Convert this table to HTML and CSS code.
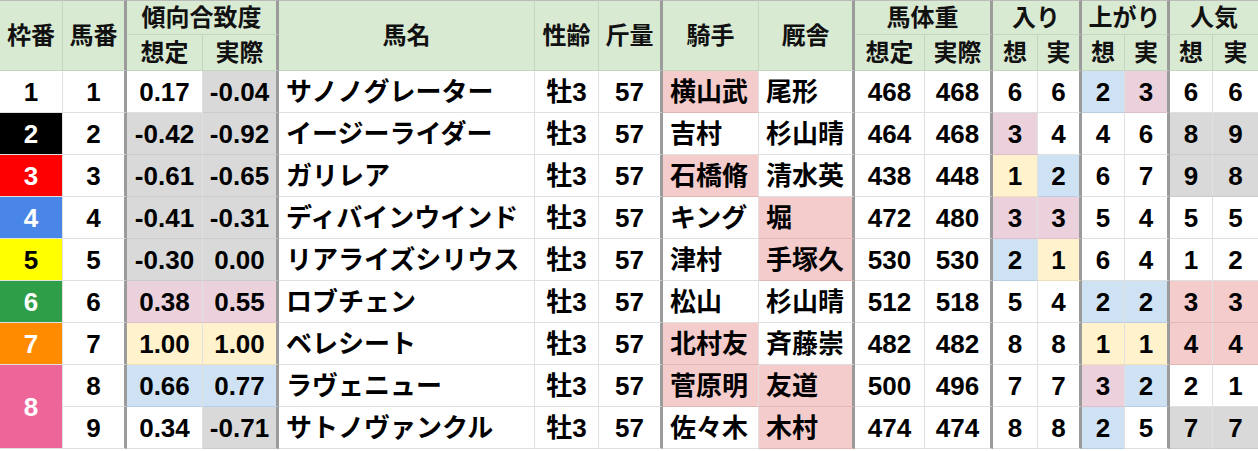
FILE: index.html
```html
<!DOCTYPE html>
<html lang="ja">
<head>
<meta charset="utf-8">
<title>傾向合致度</title>
<link rel="stylesheet" href="styles.css">
</head>
<body>
<table class="sheet">
  <colgroup>
    <col class="w63"><col class="w64"><col class="w76"><col class="w76"><col class="w256">
    <col class="w64"><col class="w64"><col class="w96"><col class="w96"><col class="w70">
    <col class="w68"><col class="w45"><col class="w44"><col class="w43"><col class="w45">
    <col class="w43"><col class="w45">
  </colgroup>
  <thead>
    <tr class="h1">
      <th rowspan="2">枠番</th>
      <th rowspan="2" class="tk">馬番</th>
      <th colspan="2" class="tk">傾向合致度</th>
      <th rowspan="2">馬名</th>
      <th rowspan="2">性齢</th>
      <th rowspan="2" class="tk">斤量</th>
      <th rowspan="2">騎手</th>
      <th rowspan="2" class="tk">厩舎</th>
      <th colspan="2" class="tk">馬体重</th>
      <th colspan="2" class="tk">入り</th>
      <th colspan="2" class="tk">上がり</th>
      <th colspan="2">人気</th>
    </tr>
    <tr class="h2">
      <th>想定</th><th class="tk">実際</th>
      <th>想定</th><th class="tk">実際</th>
      <th>想</th><th class="tk">実</th>
      <th>想</th><th class="tk">実</th>
      <th>想</th><th>実</th>
    </tr>
  </thead>
  <tbody>
    <tr>
      <td class="waku w1">1</td><td class="tk">1</td>
      <td>0.17</td><td class="gy tk">-0.04</td>
      <td class="nm">サノノグレーター</td><td>牡3</td><td class="tk">57</td>
      <td class="nm rd">横山武</td><td class="nm tk">尾形</td>
      <td>468</td><td class="tk">468</td>
      <td>6</td><td class="tk">6</td>
      <td class="bl">2</td><td class="mg tk">3</td>
      <td>6</td><td>6</td>
    </tr>
    <tr>
      <td class="waku w2">2</td><td class="tk">2</td>
      <td class="gy">-0.42</td><td class="gy tk">-0.92</td>
      <td class="nm">イージーライダー</td><td>牡3</td><td class="tk">57</td>
      <td class="nm">吉村</td><td class="nm tk">杉山晴</td>
      <td>464</td><td class="tk">468</td>
      <td class="mg">3</td><td class="tk">4</td>
      <td>4</td><td class="tk">6</td>
      <td class="gy">8</td><td class="gy">9</td>
    </tr>
    <tr>
      <td class="waku w3">3</td><td class="tk">3</td>
      <td class="gy">-0.61</td><td class="gy tk">-0.65</td>
      <td class="nm">ガリレア</td><td>牡3</td><td class="tk">57</td>
      <td class="nm rd">石橋脩</td><td class="nm tk">清水英</td>
      <td>438</td><td class="tk">448</td>
      <td class="yl">1</td><td class="bl tk">2</td>
      <td>6</td><td class="tk">7</td>
      <td class="gy">9</td><td class="gy">8</td>
    </tr>
    <tr>
      <td class="waku w4">4</td><td class="tk">4</td>
      <td class="gy">-0.41</td><td class="gy tk">-0.31</td>
      <td class="nm">ディバインウインド</td><td>牡3</td><td class="tk">57</td>
      <td class="nm">キング</td><td class="nm rd tk">堀</td>
      <td>472</td><td class="tk">480</td>
      <td class="mg">3</td><td class="mg tk">3</td>
      <td>5</td><td class="tk">4</td>
      <td>5</td><td>5</td>
    </tr>
    <tr>
      <td class="waku w5">5</td><td class="tk">5</td>
      <td class="gy">-0.30</td><td class="gy tk">0.00</td>
      <td class="nm">リアライズシリウス</td><td>牡3</td><td class="tk">57</td>
      <td class="nm">津村</td><td class="nm rd tk">手塚久</td>
      <td>530</td><td class="tk">530</td>
      <td class="bl">2</td><td class="yl tk">1</td>
      <td>6</td><td class="tk">4</td>
      <td>1</td><td>2</td>
    </tr>
    <tr>
      <td class="waku w6">6</td><td class="tk">6</td>
      <td class="mg">0.38</td><td class="mg tk">0.55</td>
      <td class="nm">ロブチェン</td><td>牡3</td><td class="tk">57</td>
      <td class="nm">松山</td><td class="nm tk">杉山晴</td>
      <td>512</td><td class="tk">518</td>
      <td>5</td><td class="tk">4</td>
      <td class="bl">2</td><td class="bl tk">2</td>
      <td class="rd">3</td><td class="rd">3</td>
    </tr>
    <tr>
      <td class="waku w7">7</td><td class="tk">7</td>
      <td class="yl">1.00</td><td class="yl tk">1.00</td>
      <td class="nm">ベレシート</td><td>牡3</td><td class="tk">57</td>
      <td class="nm rd">北村友</td><td class="nm tk">斉藤崇</td>
      <td>482</td><td class="tk">482</td>
      <td>8</td><td class="tk">8</td>
      <td class="yl">1</td><td class="yl tk">1</td>
      <td class="rd">4</td><td class="rd">4</td>
    </tr>
    <tr>
      <td class="waku w8" rowspan="2">8</td><td class="tk">8</td>
      <td class="bl">0.66</td><td class="bl tk">0.77</td>
      <td class="nm">ラヴェニュー</td><td>牡3</td><td class="tk">57</td>
      <td class="nm rd">菅原明</td><td class="nm rd tk">友道</td>
      <td>500</td><td class="tk">496</td>
      <td>7</td><td class="tk">7</td>
      <td class="mg">3</td><td class="bl tk">2</td>
      <td>2</td><td>1</td>
    </tr>
    <tr>
      <td class="tk">9</td>
      <td>0.34</td><td class="gy tk">-0.71</td>
      <td class="nm">サトノヴァンクル</td><td>牡3</td><td class="tk">57</td>
      <td class="nm">佐々木</td><td class="nm rd tk">木村</td>
      <td>474</td><td class="tk">474</td>
      <td>8</td><td class="tk">8</td>
      <td class="bl">2</td><td class="tk">5</td>
      <td class="gy">7</td><td class="gy">7</td>
    </tr>
  </tbody>
</table>
</body>
</html>
```

FILE: styles.css
```css
html, body {
  margin: 0;
  padding: 0;
  background: #ffffff;
}

.sheet {
  table-layout: fixed;
  width: 1258px;
  border-collapse: separate;
  border-spacing: 0;
  font-family: "Liberation Sans", "Noto Sans CJK JP", sans-serif;
  font-weight: bold;
  color: #000;
}

.w63 { width: 63px; }
.w64 { width: 64px; }
.w76 { width: 76px; }
.w256 { width: 256px; }
.w96 { width: 96px; }
.w70 { width: 70px; }
.w68 { width: 68px; }
.w45 { width: 45px; }
.w44 { width: 44px; }
.w43 { width: 43px; }

.sheet th,
.sheet td {
  box-sizing: border-box;
  padding: 0;
  text-align: center;
  vertical-align: middle;
  white-space: nowrap;
  overflow: hidden;
}

.sheet th {
  background: #d9ead3;
  font-size: 24px;
  line-height: 26px;
  color: #111;
  border-right: 1px solid #c4d6bf;
  border-bottom: 1px solid #c4d6bf;
}

.h1 th {
  height: 35px;
  border-top: 1px solid #bcbcbc;
}

.h2 th {
  height: 36px;
}

.sheet td {
  height: 42px;
  font-size: 26px;
  line-height: 30px;
  border-right: 1px solid #e0e0e0;
  border-bottom: 1px solid #e0e0e0;
}

.sheet .tk {
  border-right: 3px solid #9b9b9b;
}

.sheet th:last-child,
.sheet td:last-child {
  border-right: none;
}

.nm {
  text-align: left;
  padding-left: 7px;
}

.sheet .nm {
  text-align: left;
  padding-left: 7px;
}

.gy { background: #d9d9d9; border-bottom-color: #cbcbcb !important; }
.mg { background: #ead1dc; border-bottom-color: #dcbfcb !important; }
.yl { background: #fff2cc; border-bottom-color: #eedfb6 !important; }
.bl { background: #cfe2f3; border-bottom-color: #b9cee2 !important; }
.rd { background: #f4cccc; border-bottom-color: #e4b7b7 !important; }

.waku { color: #fff; }
.w1 { background: #ffffff; color: #000; }
.w2 { background: #000000; }
.w3 { background: #ff0000; }
.w4 { background: #4a86e8; }
.w5 { background: #ffff00; color: #000; }
.w6 { background: #2f9e48; }
.w7 { background: #ff8c00; }
.w8 { background: #ee6699; }
```
